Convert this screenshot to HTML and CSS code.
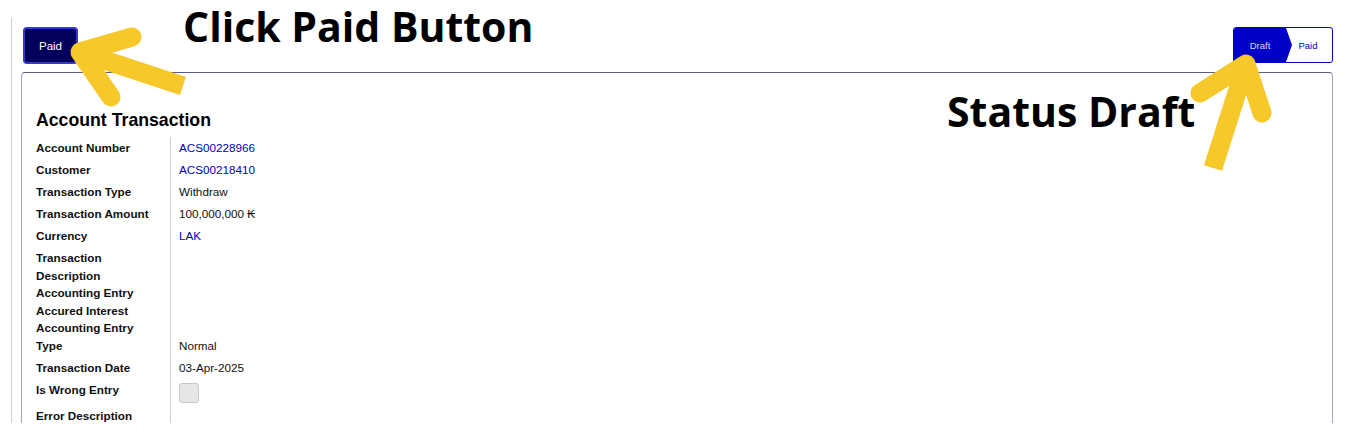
FILE: index.html
```html
<!DOCTYPE html>
<html lang="en">
<head>
  <meta charset="UTF-8" />
  <title>Account Transaction</title>
  <link rel="stylesheet" href="styles.css">
</head>
<body>
  <div class="frame">
    <div class="toolbar">
      <button class="btn-paid">Paid</button>
      <div class="status-bar">
        <span class="step active">Draft</span>
        <span class="step">Paid</span>
      </div>
    </div>

    <div class="card">
      <h2 class="card-title">Account Transaction</h2>
      <div class="fields">
        <div class="row"><div class="label">Account Number</div><div class="value link">ACS00228966</div></div>
        <div class="row"><div class="label">Customer</div><div class="value link">ACS00218410</div></div>
        <div class="row"><div class="label">Transaction Type</div><div class="value">Withdraw</div></div>
        <div class="row"><div class="label">Transaction Amount</div><div class="value">100,000,000 ₭</div></div>
        <div class="row"><div class="label">Currency</div><div class="value link">LAK</div></div>
        <div class="row join-next"><div class="label">Transaction Description</div><div class="value"></div></div>
        <div class="row join-next join-prev"><div class="label">Accounting Entry</div><div class="value"></div></div>
        <div class="row join-prev"><div class="label">Accured Interest Accounting Entry Type</div><div class="value">Normal</div></div>
        <div class="row"><div class="label">Transaction Date</div><div class="value">03-Apr-2025</div></div>
        <div class="row"><div class="label">Is Wrong Entry</div><div class="value"><span class="checkbox"></span></div></div>
        <div class="row"><div class="label">Error Description</div><div class="value"></div></div>
      </div>
    </div>
  </div>

  <!-- annotation overlay -->
  <div class="note note-click">Click Paid Button</div>
  <div class="note note-status">Status Draft</div>
  <svg class="arrows" width="1351" height="435" viewBox="0 0 1351 435">
    <g fill="none" stroke="#f6c82a" stroke-width="19" stroke-linejoin="round">
      <path d="M183 86 L80 52" />
      <path d="M132 37 L80 52 L111 97" stroke-linecap="round" />
      <path d="M1213 168 L1246 64" />
      <path d="M1200 93 L1246 64 L1262 113" stroke-linecap="round" />
    </g>
  </svg>
</body>
</html>
```

FILE: styles.css
```css
body {
  margin: 0;
  font-family: 'Liberation Sans', Arial, sans-serif;
  background: white;
  color: #111;
}
.frame {
  margin: 18px 0 0 11px;
  height: 405px;
  border-left: 1px solid #cfcfcf;
  padding: 9px 18px 0 9px;
  box-sizing: border-box;
  overflow: hidden;
}
.toolbar {
  display: flex;
  justify-content: space-between;
  align-items: flex-start;
  height: 37px;
  margin-bottom: 8px;
}
.btn-paid {
  margin-left: 2px;
  width: 55px;
  height: 37px;
  background: #00005a;
  color: white;
  border: 2px solid #3838d0;
  border-radius: 4px;
  font-family: 'Liberation Sans', Arial, sans-serif;
  font-size: 11.5px;
  padding: 0;
}
.status-bar {
  display: flex;
  width: 100px;
  height: 36px;
  border: 1px solid #0000c8;
  border-radius: 3px;
  box-sizing: border-box;
  overflow: hidden;
  background: white;
  font-size: 9.5px;
}
.step {
  display: flex;
  align-items: center;
  justify-content: center;
  flex: 1;
  color: #0000c0;
  padding-right: 8px;
}
.step.active {
  flex: 0 0 58px;
  background: #0000c8;
  color: #d8d8ff;
  padding-right: 6px;
  box-sizing: border-box;
  clip-path: polygon(0 0, 52px 0, 100% 50%, 52px 100%, 0 100%);
}
.card {
  border: 1px solid #a6a4bf;
  border-top-color: #5e5b80;
  border-bottom: none;
  border-radius: 4px 4px 0 0;
  padding: 0 14px;
  height: 400px;
}
.card-title {
  margin: 37px 0 7px;
  font-size: 17.7px;
  line-height: 20px;
  font-weight: bold;
  color: #000;
}
.fields {
  font-size: 11.7px;
}
.row {
  display: grid;
  grid-template-columns: 134px 1fr;
  line-height: 17.6px;
}
.label,
.value {
  padding: 2.2px 0;
}
.row.join-next .label,
.row.join-next .value {
  padding-bottom: 0;
}
.row.join-prev .label,
.row.join-prev .value {
  padding-top: 0;
}
.label {
  font-weight: bold;
  padding-right: 14px;
}
.value {
  border-left: 1px solid #cfcfcf;
  padding-left: 8px;
  display: flex;
  align-items: flex-end;
}
.link {
  color: #0000c0;
}
.checkbox {
  display: block;
  width: 20px;
  height: 20px;
  margin: 2px 0 0;
  background: #e6e6e6;
  border: 1px solid #c6c6c6;
  border-radius: 3px;
  box-sizing: border-box;
}
.note {
  position: absolute;
  font-family: 'Open Sans', sans-serif;
  font-weight: bold;
  font-size: 41px;
  line-height: 1;
  color: #000;
}
.note-click {
  left: 183px;
  top: 6px;
}
.note-status {
  left: 947px;
  top: 91px;
}
.arrows {
  position: absolute;
  left: 0;
  top: 0;
  pointer-events: none;
}
```
